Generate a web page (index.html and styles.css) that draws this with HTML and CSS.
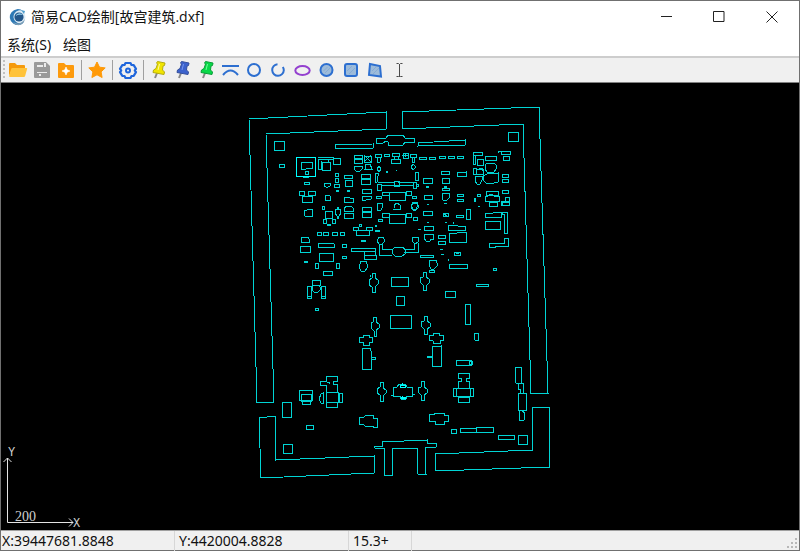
FILE: index.html
```
<!DOCTYPE html>
<html lang="zh-CN">
<head>
<meta charset="utf-8">
<title>简易CAD绘制[故宫建筑.dxf]</title>
<link rel="stylesheet" href="styles.css">
</head>
<body>
<div class="window">
  <header class="titlebar">
    <svg class="app-icon" viewBox="0 0 18 18" aria-hidden="true">
      <circle cx="9" cy="9" r="7.500" fill="#dcebf5"/>
      <path d="M14 3A8 8 0 1 0 15.500 13.500A6.500 6.500 0 1 1 14 3z" fill="#2d79b5"/>
      <circle cx="10" cy="9" r="4.600" fill="#24578a"/>
      <path d="M6 8q4-5 8-1q-4-1-8 1z" fill="#8ccbea"/>
      <path d="M4 14q7 4 12-3q-2 7-8 6q-3-1-4-3z" fill="#7b9db5"/>
      <path d="M12 2l4 1-1 3z" fill="#4d9ccc"/>
    </svg>
    <h1 class="title">简易CAD绘制[故宫建筑.dxf]</h1>
    <div class="captions">
      <button class="caption" aria-label="最小化"><svg viewBox="0 0 12 12"><path d="M1 5.500h11"/></svg></button>
      <button class="caption" aria-label="最大化"><svg viewBox="0 0 12 12"><path d="M.5 .5h10.500v10h-10.500z"/></svg></button>
      <button class="caption" aria-label="关闭"><svg viewBox="0 0 12 12"><path d="M.5 .5l11 11M11.500 .5l-11 11"/></svg></button>
    </div>
  </header>
  <nav class="menubar">
    <button class="menu">系统(S)</button>
    <button class="menu">绘图</button>
  </nav>
  <div class="toolbar" role="toolbar">
    <span class="grip"></span>
    <button class="tool" aria-label="打开"><svg viewBox="0 0 20 20"><path d="M1 4q0-1 1-1h5l2 2h7q1 0 1 1v3h-13l-3 7z" fill="#f59a0c"/><path d="M4.500 8h14q1 0 .6 1l-2 7q-.2 1-1.200 1h-14q-1 0-.8-1l2-7q.3-1 1.400-1z" fill="#ffc33a"/></svg></button>
    <button class="tool" aria-label="保存"><svg viewBox="0 0 20 20"><path d="M3 2h11l4 4v11q0 1-1 1h-14q-1 0-1-1v-14q0-1 1-1z" fill="#9a9a9a"/><path d="M5 5h6v2h-6zM12 3h2v4h-2zM5 12h10v1h-10zM7 14h2v2h-2z" fill="#ececec"/></svg></button>
    <button class="tool" aria-label="新建"><svg viewBox="0 0 20 20"><path d="M2 4q0-1 1-1h5l2 2h7q1 0 1 1v11q0 1-1 1h-14q-1 0-1-1z" fill="#fd9a0c"/><path d="M10 7l1.200 2.800 2.800 1.200-2.800 1.200-1.200 2.800-1.200-2.800-2.800-1.200 2.800-1.200z" fill="#fff" stroke="#fff" stroke-width=".6"/></svg></button>
    <span class="divider"></span>
    <button class="tool" aria-label="收藏"><svg viewBox="0 0 20 20"><path d="M10 2l2.500 5.200 5.700.7-4.100 4 1 5.600-5.100-2.700-5.100 2.700 1-5.600-4.100-4 5.700-.7z" fill="#ff9a08" stroke="#ff9a08" stroke-linejoin="round"/></svg></button>
    <span class="divider"></span>
    <button class="tool" aria-label="设置"><svg viewBox="0 0 20 20" fill="none" stroke="#1f66dc"><path d="M7.500 3h5l1 2 2.200.2 2.300 3.600-1.200 1.700 1.200 1.700-2.300 3.600-2.200.2-1 2h-5l-1-2-2.200-.2-2.300-3.600 1.200-1.700-1.200-1.700 2.300-3.600 2.200-.2z" stroke-width="2.200" stroke-linejoin="round"/><circle cx="10" cy="10.500" r="2" stroke-width="2"/></svg></button>
    <span class="divider"></span>
    <button class="tool" aria-label="黄色图钉"><svg viewBox="0 0 20 20"><path d="M8 13l-2 5" stroke="#888" stroke-width="2"/><path d="M8.500 1.500l7.500 1.500-.5 2.500-1.500.5-.5 4 2 2-.5 2.500-11-2 .5-2.500 2.500-1.500 1.500-4.500-1-1z" fill="#f0e400" stroke="#b5ab10"/><path d="M10.500 4l-1.500 6" stroke="#fffba0"/></svg></button>
    <button class="tool" aria-label="蓝色图钉"><svg viewBox="0 0 20 20"><path d="M8 13l-2 5" stroke="#888" stroke-width="2"/><path d="M8.500 1.500l7.500 1.500-.5 2.500-1.500.5-.5 4 2 2-.5 2.500-11-2 .5-2.500 2.500-1.500 1.500-4.500-1-1z" fill="#3c62cc" stroke="#344f9c"/><path d="M10.500 4l-1.500 6" stroke="#7695ef"/></svg></button>
    <button class="tool" aria-label="绿色图钉"><svg viewBox="0 0 20 20"><path d="M8 13l-2 5" stroke="#888" stroke-width="2"/><path d="M8.500 1.500l7.500 1.500-.5 2.500-1.500.5-.5 4 2 2-.5 2.500-11-2 .5-2.500 2.500-1.500 1.500-4.500-1-1z" fill="#08d848" stroke="#0a9d38"/><path d="M10.500 4l-1.500 6" stroke="#70ff9a"/></svg></button>
    <button class="tool" aria-label="曲线"><svg viewBox="0 0 20 20" fill="none" stroke="#2d6fd0" stroke-width="2"><path d="M1 6h17M2 15q7.500-9 15 0"/></svg></button>
    <button class="tool" aria-label="圆"><svg viewBox="0 0 20 20" fill="none" stroke="#2d6fd0" stroke-width="2"><circle cx="9" cy="10" r="6"/></svg></button>
    <button class="tool" aria-label="圆弧"><svg viewBox="0 0 20 20" fill="none" stroke="#2d6fd0" stroke-width="2"><path d="M8.500 4.200a5.800 5.800 0 1 0 6.300 6q0-1.700-1-3.200"/></svg></button>
    <button class="tool" aria-label="椭圆"><svg viewBox="0 0 20 20" fill="none" stroke="#9440cf" stroke-width="2"><ellipse cx="9.500" cy="10.500" rx="7.200" ry="4.500"/></svg></button>
    <button class="tool" aria-label="填充圆"><svg viewBox="0 0 20 20" fill="#9dbbd9" stroke="#2d6fd0" stroke-width="2"><circle cx="9.500" cy="10" r="6"/><path d="M6.500 11l4-4M8 13l5-5" stroke="#86abd6" stroke-width="1"/></svg></button>
    <button class="tool" aria-label="填充矩形"><svg viewBox="0 0 20 20" fill="#9dbbd9" stroke="#2d6fd0" stroke-width="2"><rect x="4" y="4" width="12" height="12" rx="2"/><path d="M6 11l5-5M8 14l6-6" stroke="#86abd6" stroke-width="1"/></svg></button>
    <button class="tool" aria-label="填充多边形"><svg viewBox="0 0 20 20" fill="#9dbbd9" stroke="#2d6fd0" stroke-width="2"><path d="M5 4l10 2 1 10.500-12-1.500z"/><path d="M7 11l4-4M8 14l6-6" stroke="#86abd6" stroke-width="1"/></svg></button>
    <button class="tool" aria-label="文字"><svg viewBox="0 0 20 20" fill="none" stroke="#4a4a4a"><path d="M7.500 3.500h2l1 1 1-1h2M10.500 4v13M7.500 16.500h2l1-1 1 1h2"/></svg></button>
  </div>
  <main class="canvas">
    <svg class="drawing" viewBox="1 83 798 447" role="img" aria-label="故宫建筑平面图">
      <!-- city wall -->
      <path d="M249 119L386 112V129L266 134L274 402H257zM259 418L275 416L276 460L374 456V473L261 478zM402 112L539 107L548 393H531L523 124L402 129zM532 407H549L550 467L435 471V454L533 450z"/>
      <!-- corner towers -->
      <path d="M274 141h10v9h-10zM508 132h10v9h-10zM283 444h9v9h-9zM518 435h9v9h-9z"/>
      <!-- south gate -->
      <path d="M374 446h8v-4l45-2v3h9v4l-11 1l1 26h-8l-1-26h-25v27h-8v-27h-9z"/>
      <!-- north-west quarter -->
      <path d="M279 164h5v3h-5zM335 145L373 144V148L336 149zM301 162h11v6h-5l-1 1h-5zM305 171h3v3h-3zM303 176h5v1h-5zM318 157h15v2h-15v10h3v-8M322 162h8v8h-8zM333 158h7v6h-7zM324 159h4v4M354 155h8v3h-8zM354 159h8v4h-8zM354 166h8v3l-2 2h-4l-2-2zM364 155l7 7M364 162l7-7M364 156h7v6h-7zM366 164h4l2 5h-7zM335 173h3v3h-3zM335 178h3v4h-3zM334 184h5v3h-5zM336 190h2v1h-2zM347 190h2v1h-2zM344 175h8v3h-8zM345 180h7v6h-7zM361 174h9v4h-9zM361 179h9v5h-9zM362 189h9v4h-9zM362 196h9v3l-5 1h-4zM344 198l4-1l2 1h3v4h-9zM304 182h5v2h-5zM299 191h5v4h-5zM308 191h7v4h-7zM302 196h10v6h-10zM324 183h6v3l-2 1h-2l-2-1zM325 196l2-1h2l1 1v4h-5zM322 206h2v3h-2zM304 210h3l1-1h4v7h-7zM325 211h7v7h-7zM323 219h3v4h-3zM332 219h3v4h-3zM327 224h3v1h-3zM336 209h4l1 4l-2 3h-2l-2-3zM337 207h1v1h-1zM337 217h1v1h-1zM344 211v-3l3-2h4l2 2v3zM344 213h9v5h-9zM362 207h9v4h-9zM362 212h9v5h-9zM353 227h5v3h-5zM366 227h6v3h-6zM357 230h12v5h-13v-4zM359 224h2v2h-2zM375 225h1v1h-1zM375 230h4v1h-4zM361 240h4v1h-4z"/>
      <path d="M317 232h4v3h-4zM323 232h5v3h-5zM332 232h5v3h-5zM340 232h4v3h-4zM301 237h7l1 2v3h-8zM300 246h10v6h-10zM304 261h3v1h-3zM318 243h15l1 1v3h-16zM320 253h13v8h-14v-6zM342 244h4v3h-4zM342 256h4v2h-4zM315 263h3v5h-3zM336 263h3v5h-3zM323 271h9v4h-9zM312 280h8v5h-8zM307 286h4v12h-4zM307 296h4M321 286h4v12h-4zM321 296h4M312 287l2-2h4l2 2v3l-2 2h-4l-2-2zM315 308h3v2h-3zM351 248h24v3h-24zM364 251h11v4h-11zM364 255h12v4h-12zM361 261h5l1 3v4l-2 3h-4l-2-4z"/>
      <!-- north-east quarter -->
      <path d="M418 143l47-3v5l-47 1zM419 157h7v2h-7zM429 157h6v2h-6zM439 156h6v2h-6zM448 156h6v2h-6zM457 156h6v2h-6zM473 152h9v3h-9zM473 155h2v9h-2zM477 159h6v6h-6zM485 156h11v4h-11zM498 153v-2h12v3h-9v-3M503 156h6v4h-6zM487 163h7l2 2v4l-2 3h-7l-2-3v-4zM473 168h3v6h-3zM476 169h7v5h-7zM479 168h3v3M475 176h7v4l-2 4h-3l-2-3zM487 174l11-1v9l-4 1h-8l-3-3v-4zM502 174h6v3h-6zM502 179h6v3h-6zM502 190h6v3h-6zM505 197h4v4h-4zM502 202h7v3h-7zM486 191h12v4h-12zM485 196h3l3-2l3 2h5v5h-14zM489 202h8v4h-8zM501 201h8v4h-8zM477 194h3v2h-3zM474 198h1v3h-1zM478 206h2M467 209h2M441 171h8v3h-8zM442 178h7v5h-7zM423 178h9v5h-9zM457 173l9-1v4h-9zM426 186h2v1h-2zM444 186h2v1h-2zM442 188h7v2h-7zM442 193h7v5l-2 2h-4l-1-2zM424 195h8v4h-8zM457 194h6v2h-6zM457 199h6v2h-6z"/>
      <path d="M413 202h4l1 3l-2 4h-3l-2-3zM427 204h2M444 203h3M423 211h9v4h-9zM427 222h2M418 229h3M424 226h9v4h-9zM424 234h9v5h-2l-1 2h-4l-1-2h-1zM443 213h5v3h-5zM444 214l3 2M456 215h7v2h-7zM466 209h4v10h-4zM445 222h2M453 222v2M448 225h9l1 1h7v4h-17zM449 233h8l1-1h8v10h-17zM438 235h7v3h-7zM438 241h7v3h-7zM440 249h3M441 254h3M454 252h6v3h-6zM456 253h3M420 255h13v2h-13zM448 259v2M449 264h18v4h-18zM430 260h6l1 3v3l-3 3h-3l-2-4zM429 270h5v2h-5zM445 291h10v6h-10zM476 284h12v2h-12zM493 268h3v2h-3zM465 304h5v20h-5zM485 213h8l1-1h7v5h-16zM485 221h15v8h-15zM502 212h5v21h-3v-19h-2zM504 238h4v8h-13v1h-6v-4h15z"/>
      <!-- inner court -->
      <path d="M376 138h10l2-3h15l2 3h9v4h-9l-2 3h-15v-3l-2-1l-3 2h-7zM375 154h6v3h-6zM377 157h3v5l-2 1zM384 154h5v2h-5zM392 153h7v3h-7zM391 159h9v4h-9zM394 156v3M398 156v3M403 153h5v5h-5zM402 155h7M405 153v4M410 154h6v3h-6zM412 157h2v5h-2zM379 166l2 3l-2 3l-2-3zM413 164l3 3l-3 3l-2-3zM386 171h1v1h-1zM396 170h1M375 173h3v3l-1 6h-2zM377 184h4v6h-4zM415 172h3v8h-3zM413 182h3v6h-3zM378 182h16l2-1l2 1h16M381 185h12l3 1l3-1h14M394 181h5v5h-5zM416 184h2v2h-2zM389 192h16v8h-16zM382 192h7v3h-7zM406 191h5v4h-5zM376 196h5v2h-5zM412 196h4v2h-4zM377 203h5l1 3l-2 4h-4zM394 208v-3l3-2l3 2v4h-7M413 203h3l2 2v3l-2 2h-3l-2-3zM418 205h1M389 214h16v9h-16zM382 213h7v4h-7zM406 213h5v4h-5zM378 219h4v2h-4zM413 217h4v3h-4zM379 237h4l1 2v3l-2 2h-3l-2-3zM413 237h5v5l-3 2l-3-3zM379 244v11h13M382 244v5h11M414 244v5h-10M418 243v9h-14M394 248l3-1h6l2 3v4l-3 2h-7l-3-3v-3z"/>
      <!-- outer court -->
      <path d="M391 277h17v9h-17zM396 296h8v9h-8zM390 315h21v13h-21zM393 387h4l2-3h6l2 3h5v9h-5l-1 3h-5l-1-3h-7zM391 395h3M412 394h3M362 348h8l1 3v18h-9zM371 357h4v2h-4zM432 347l9-1v20h-9zM427 356h5v1h-5zM372 273h3v5l3 2v4l-3 3v5h-3v-5l-3-2v-5l3-2zM370 275v2M423 272h3v5l3 2v4l-3 3v4h-3v-5l-3-3v-4l3-1zM373 317h3v5l3 2v4l-3 2v6h-2v-5l-3-3v-5l2-1zM425 316h2v5l3 2v4l-3 2v5h-3v-5l-3-3v-4l3-1zM381 382h2v6l3 2v3l-3 3v5h-3v-6l-3-2v-4l3-2zM422 381h2v6l3 2v4l-3 2v5h-3v-5l-3-3v-4l3-1zM359 337h4v-2h6v2h3v5h-3v3h-6v-3h-4zM429 335h4v-2h6v2h4v5h-3v3h-7v-2l-4-1z"/>
      <!-- south-west quarter -->
      <path d="M326 376h11v5h-4v3h4v8h-11v-7h-6v-4h6zM327 382h2v2M321 394l2-1v10h-2l-2-4zM326 392h12v10h-12zM339 393h3v9h-3zM326 402h11v5h-11zM299 390h13v10h-13zM301 394h10v7h-10zM302 401h8v3h-8zM282 402h9v15h-9zM306 425h7v4h-7zM359 417h5l2-2h7v3h4v9h-4v-1h-8l-2-2h-4z"/>
      <!-- south-east quarter -->
      <path d="M474 333h4v7h-3l-1-3zM456 360h15v5h-15zM469 361h3v3h-3zM458 373h11v5h-3v3h3v7h-11v-7h3v-3h-3zM453 388h20v8h-20zM456 388v8M470 388v8M458 397h11v5h-11zM515 367h6v16h-5zM518 383h5v10h-3v-4h-2zM518 393h8v17h-8zM519 411v9h5l1-7l-4-3zM451 429h5v4h-5zM460 428h16v4h-16zM476 427h17v5h-17zM498 435h16v4h-16zM429 414h5v-1h10v2h4v6h-4v3h-9v-3h-6z"/>
      <g class="selected"><path d="M296 157h19v19h-19z"/><path d="M400 385h5v2h-5zM401 397h4v1h-4zM402 383v3M402 396v3"/></g>
    </svg>
    <svg class="axes" viewBox="0 0 84 88" aria-label="坐标轴">
      <path d="M6.500 16V80.500H72M2.500 20l4-4 4 4M68 76.500l4 4-4 4"/>
      <text class="axis-name" x="7" y="14">Y</text>
      <text class="axis-name" x="72" y="85">X</text>
      <text class="axis-scale" x="14" y="79">200</text>
    </svg>
  </main>
  <footer class="statusbar">
    <span class="panel coord">X:39447681.8848</span>
    <span class="panel coord">Y:4420004.8828</span>
    <span class="panel zoom">15.3+</span>
    <svg class="resize" viewBox="0 0 12 12" aria-hidden="true"><path d="M9 1h2v2h-2zM5 5h2v2h-2zM9 5h2v2h-2zM1 9h2v2h-2zM5 9h2v2h-2zM9 9h2v2h-2z"/></svg>
  </footer>
</div>
</body>
</html>
```
FILE: styles.css
```
* {
  box-sizing: border-box;
}

body {
  margin: 0;
  font: 14px/20px "Noto Sans", "Noto Sans CJK SC", sans-serif;
  color: #111;
}

button {
  border: 0;
  padding: 0;
  background: none;
  font: inherit;
  color: inherit;
}

.window {
  display: flex;
  flex-direction: column;
  height: 100vh;
  border: 1px solid #707070;
  background: #fff;
}

.titlebar {
  display: flex;
  align-items: center;
  height: 32px;
  padding-left: 8px;
}

.app-icon {
  width: 18px;
  height: 18px;
  margin-right: 4px;
}

.title {
  flex: 1;
  margin: 0;
  font: 14px/20px "Open Sans", "Noto Sans CJK SC", sans-serif;
}

.captions {
  display: flex;
  padding-right: 1px;
}

.caption {
  display: grid;
  place-items: center;
  width: 53px;
  height: 32px;
}

.caption svg {
  width: 12px;
  height: 12px;
  fill: none;
  stroke: #222;
}

.menubar {
  display: flex;
  gap: 12px;
  height: 23px;
  padding: 1px 0 0 6px;
}

.toolbar {
  display: flex;
  align-items: center;
  height: 27px;
  border-top: 2px solid #cdcdcd;
  border-bottom: 1px solid #808080;
  background: #f0f0f0;
}

.grip {
  width: 2px;
  height: 20px;
  margin: 0 1px 0 2px;
  background: repeating-linear-gradient(#c0c0c0 0 2px, transparent 2px 4px);
}

.tool {
  display: grid;
  place-items: center;
  width: 24px;
  height: 24px;
}

.tool svg {
  width: 20px;
  height: 20px;
}

.divider {
  width: 1px;
  height: 20px;
  margin: 0 3px;
  background: #a0a0a0;
}

.canvas {
  position: relative;
  flex: 1;
  min-height: 0;
  background: #000;
}

.drawing {
  display: block;
  width: 100%;
  height: 100%;
  fill: none;
  stroke: #00d4d4;
  shape-rendering: crispEdges;
}

.selected {
  stroke: #00ffff;
}

.axes {
  position: absolute;
  left: 0;
  bottom: 0;
  width: 84px;
  height: 88px;
  fill: none;
  stroke: #e4e4e4;
}

.axes text {
  fill: #d0d0d0;
  stroke: none;
}

.axis-name {
  font: 12px "Liberation Mono", monospace;
}

.axis-scale {
  font: 14px "Liberation Serif", serif;
}

.statusbar {
  display: flex;
  align-items: center;
  height: 20px;
  border-top: 1px solid #a0a0a0;
  background: #f0f0f0;
}

.panel {
  padding-left: 4px;
  border-right: 1px solid #d7d7d7;
}

.panel:first-child {
  padding-left: 1px;
}

.coord {
  width: 174px;
}

.zoom {
  width: 63px;
}

.resize {
  width: 12px;
  height: 12px;
  margin: 4px 1px 0 auto;
  fill: #b8b8b8;
}
```
